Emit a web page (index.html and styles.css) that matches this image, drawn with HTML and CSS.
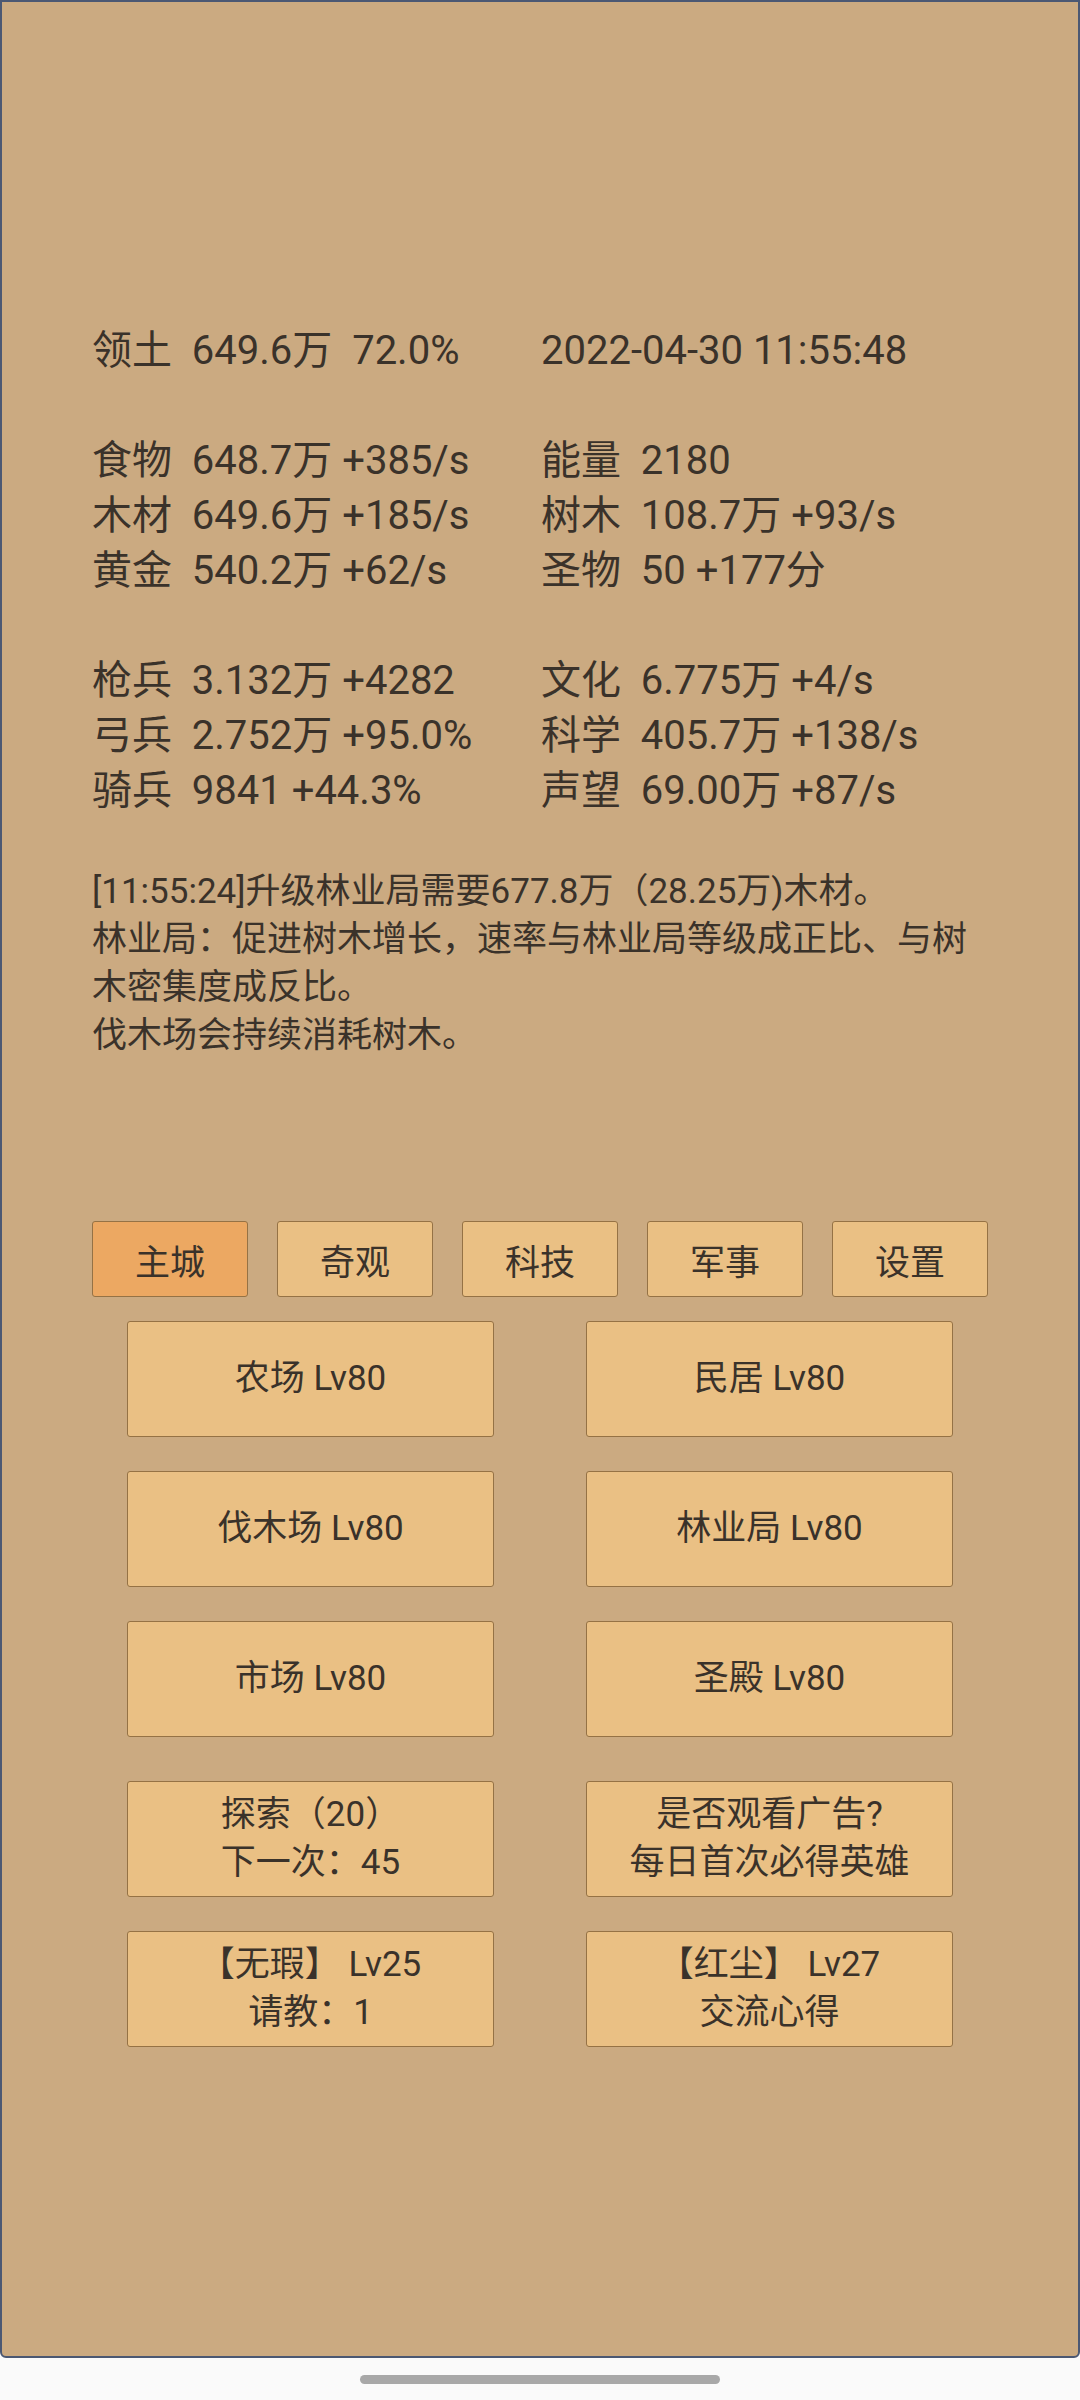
FILE: index.html
```html
<!DOCTYPE html>
<html lang="zh-CN">

<head>
  <meta charset="UTF-8">
  <meta name="viewport" content="width=device-width, initial-scale=1.0">
  <title>主城</title>
  <link rel="stylesheet" href="styles.css">
</head>

<body>
  <div class="frame">
    <div class="stats">
      <div class="cell">领土  649.6万  72.0%</div>
      <div class="cell">2022-04-30 11:55:48</div>
      <div class="cell blank"></div>
      <div class="cell blank"></div>
      <div class="cell">食物  648.7万 +385/s</div>
      <div class="cell">能量  2180</div>
      <div class="cell">木材  649.6万 +185/s</div>
      <div class="cell">树木  108.7万 +93/s</div>
      <div class="cell">黄金  540.2万 +62/s</div>
      <div class="cell">圣物  50 +177分</div>
      <div class="cell blank"></div>
      <div class="cell blank"></div>
      <div class="cell">枪兵  3.132万 +4282</div>
      <div class="cell">文化  6.775万 +4/s</div>
      <div class="cell">弓兵  2.752万 +95.0%</div>
      <div class="cell">科学  405.7万 +138/s</div>
      <div class="cell">骑兵  9841 +44.3%</div>
      <div class="cell">声望  69.00万 +87/s</div>
    </div>

    <div class="log">
      <p>[11:55:24]升级林业局需要677.8万（28.25万)木材。</p>
      <p>林业局：促进树木增长，速率与林业局等级成正比、与树木密集度成反比。</p>
      <p>伐木场会持续消耗树木。</p>
    </div>

    <div class="tabs">
      <div class="tab active">主城</div>
      <div class="tab">奇观</div>
      <div class="tab">科技</div>
      <div class="tab">军事</div>
      <div class="tab">设置</div>
    </div>

    <div class="buildings">
      <div class="btn">农场 Lv80</div>
      <div class="btn">民居 Lv80</div>
      <div class="btn">伐木场 Lv80</div>
      <div class="btn">林业局 Lv80</div>
      <div class="btn">市场 Lv80</div>
      <div class="btn">圣殿 Lv80</div>
    </div>

    <div class="buildings actions">
      <div class="btn">探索（20）<br>下一次：45</div>
      <div class="btn">是否观看广告?<br>每日首次必得英雄</div>
      <div class="btn">【无瑕】 Lv25<br>请教：1</div>
      <div class="btn">【红尘】 Lv27<br>交流心得</div>
    </div>
  </div>

  <div class="nav-bar">
    <div class="pill"></div>
  </div>
</body>

</html>
```

FILE: styles.css
```css
body {
  margin: 0;
  width: 1080px;
  height: 2400px;
  background-color: #fafafa;
  font-family: Roboto, "Noto Sans CJK SC", sans-serif;
  color: #3a322a;
  overflow: hidden;
}

.frame {
  box-sizing: border-box;
  height: 2358px;
  border: 2px solid #4b5873;
  border-radius: 0 0 6px 6px;
  background-color: #cbaa81;
  padding: 321px 90px 0;
}

.stats {
  display: grid;
  grid-template-columns: 449px auto;
  font-size: 40px;
  line-height: 55px;
}

.cell {
  white-space: pre;
  height: 55px;
}

.log {
  margin-top: 50px;
  width: 896px;
  font-size: 35px;
  line-height: 48px;
}

.log p {
  margin: 0;
}

.tabs {
  display: flex;
  gap: 29px;
  margin-top: 161px;
}

.tab {
  box-sizing: border-box;
  width: 156px;
  height: 76px;
  display: flex;
  align-items: center;
  justify-content: center;
  font-size: 35px;
  background-color: #eac084;
  border: 1.5px solid #957245;
  border-radius: 3px;
}

.tab.active {
  background-color: #eca862;
}

.buildings {
  display: grid;
  grid-template-columns: 367px 367px;
  column-gap: 92px;
  row-gap: 34px;
  justify-content: center;
  margin-top: 24px;
}

.buildings.actions {
  margin-top: 44px;
}

.btn {
  box-sizing: border-box;
  height: 116px;
  display: flex;
  align-items: center;
  justify-content: center;
  text-align: center;
  font-size: 35px;
  line-height: 48px;
  background-color: #eac084;
  border: 1.5px solid #957245;
  border-radius: 3px;
}

.nav-bar {
  height: 42px;
  display: flex;
  justify-content: center;
  padding-top: 17px;
}

.pill {
  width: 360px;
  height: 9px;
  border-radius: 5px;
  background-color: #a8a8a8;
}
```
